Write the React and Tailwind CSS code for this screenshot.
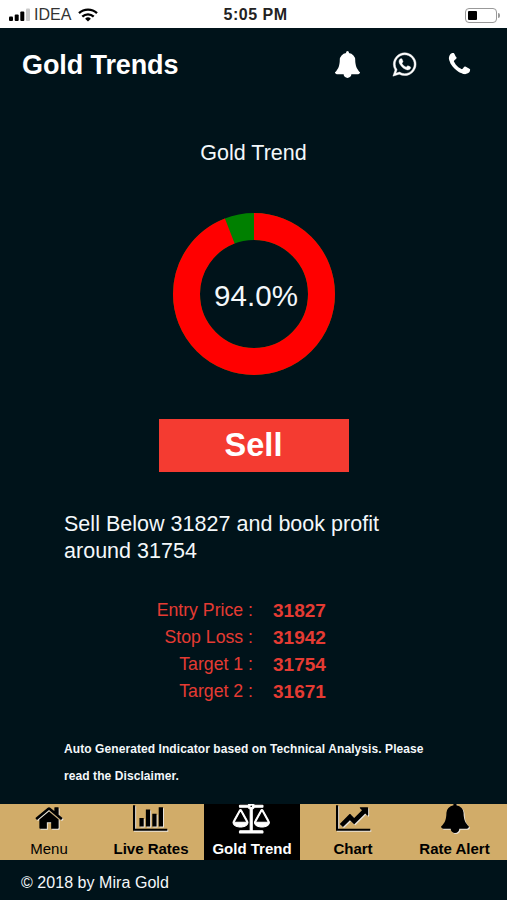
import clsx from 'clsx'

const ICONS = {
  bell: {
    width: 1792,
    d: 'M1728 1408q0 52-38 90t-90 38h-448q0 106-75 181t-181 75-181-75-75-181h-448q-52 0-90-38t-38-90q50-42 91-88t85-119.5 74.5-158.5 50-206 19.5-260q0-152 117-282.5t307-158.5q-8-19-8-39 0-40 28-68t68-28 68 28 28 68q0 20-8 39 190 28 307 158.5t117 282.5q0 139 19.5 260t50 206 74.5 158.5 85 119.5 91 88z',
  },
  whatsapp: {
    width: 1792,
    d: 'M1113 974q13 0 97.5 44t89.5 53q2 5 2 15 0 33-17 76-16 39-71 65.5t-102 26.5q-57 0-190-62-98-45-170-118t-148-185q-72-107-71-194v-8q3-91 74-158 24-22 52-22 6 0 18 1.5t19 1.5q19 0 26.5 6.5t15.5 27.5q8 20 33 88t25 75q0 21-34.5 57.5t-34.5 46.5q0 7 5 15 34 73 102 137 56 53 151 101 12 7 22 7 15 0 54-48.5t52-48.5zm-203 530q127 0 243.5-50t200.5-134 134-200.5 50-243.5-50-243.5-134-200.5-200.5-134-243.5-50-243.5 50-200.5 134-134 200.5-50 243.5q0 203 120 368l-79 233 242-77q158 104 345 104zm0-1382q153 0 292.5 60t240.5 161 161 240.5 60 292.5-60 292.5-161 240.5-240.5 161-292.5 60q-195 0-365-94l-417 134 136-405q-108-178-108-389 0-153 60-292.5t161-240.5 240.5-161 292.5-60z',
  },
  phone: {
    width: 1792,
    d: 'M1600 1240q0 27-10 70.5t-21 68.5q-21 50-122 106-94 51-186 51-27 0-53-3.5t-57.5-12.5-47-14.5-55.5-20.5-49-18q-98-35-175-83-127-79-264-216t-216-264q-48-77-83-175-3-9-18-49t-20.5-55.5-14.5-47-12.5-57.5-3.5-53q0-92 51-186 56-101 106-122 25-11 68.5-21t70.5-10q14 0 21 3 18 6 53 76 11 19 30 54t35 63.5 31 53.5q3 4 17.5 25t21.5 35.5 7 28.5q0 20-28.5 50t-62 55-62 53-28.5 46q0 9 5 22.5t8.5 20.5 14 24 11.5 19q76 137 174 235t235 174q2 1 19 11.5t24 14 20.5 8.5 22.5 5q18 0 46-28.5t53-62 55-62 50-28.5q14 0 28.5 7t35.5 21.5 25 17.5q25 15 53.5 31t63.5 35 54 30q70 35 76 53 3 7 3 21z',
  },
  home: {
    width: 1792,
    d: 'M1472 992v480q0 26-19 45t-45 19h-384v-384h-256v384h-384q-26 0-45-19t-19-45v-480q0-1 .5-3t.5-3l575-474 575 474q1 2 1 6zm223-69l-62 74q-8 9-21 11h-3q-13 0-21-7l-692-577-692 577q-12 8-24 7-13-2-21-11l-62-74q-8-10-7-23.5t11-21.5l719-599q32-26 76-26t76 26l244 204v-195q0-14 9-23t23-9h192q14 0 23 9t9 23v408l219 182q10 8 11 21.5t-7 23.5z',
  },
  bars: {
    width: 2048,
    d: 'M640 896v512h-256v-512h256zm384-512v1024h-256v-1024h256zm1024 1152v128h-2048v-1536h128v1408h1920zm-640-896v768h-256v-768h256zm384-384v1152h-256v-1152h256z',
  },
  scale: {
    width: 2176,
    d: 'M1728 448l-384 704h768zm-1280 0l-384 704h768zm821-192q-14 40-45.5 71.5t-71.5 45.5v1291h608q14 0 23 9t9 23v64q0 14-9 23t-23 9h-1344q-14 0-23-9t-9-23v-64q0-14 9-23t23-9h608v-1291q-40-14-71.5-45.5t-45.5-71.5h-491q-14 0-23-9t-9-23v-64q0-14 9-23t23-9h491q21-57 70-92.5t111-35.5 111 35.5 70 92.5h491q14 0 23 9t9 23v64q0 14-9 23t-23 9h-491zm-181 16q33 0 56.5-23.5t23.5-56.5-23.5-56.5-56.5-23.5-56.5 23.5-23.5 56.5 23.5 56.5 56.5 23.5zm1088 880q0 73-46.5 131t-117.5 91-144.5 49.5-139.5 16.5-139.5-16.5-144.5-49.5-117.5-91-46.5-131q0-11 35-81t92-174.5 107-195.5 102-184 56-100q18-33 56-33t56 33q4 7 56 100t102 184 107 195.5 92 174.5 35 81zm-1280 0q0 73-46.5 131t-117.5 91-144.5 49.5-139.5 16.5-139.5-16.5-144.5-49.5-117.5-91-46.5-131q0-11 35-81t92-174.5 107-195.5 102-184 56-100q18-33 56-33t56 33q4 7 56 100t102 184 107 195.5 92 174.5 35 81z',
  },
  line: {
    width: 2048,
    d: 'M2048 1536v128h-2048v-1536h128v1408h1920zm-128-1248v435q0 21-19.5 29.5t-35.5-7.5l-121-121-633 633q-10 10-23 10t-23-10l-233-233-416 416-192-192 585-585q10-10 23-10t23 10l233 233 464-464-121-121q-16-16-7.5-35.5t29.5-19.5h435q14 0 23 9t9 23z',
  },
}

const LEVELS = [
  { label: 'Entry Price :', value: '31827' },
  { label: 'Stop Loss :', value: '31942' },
  { label: 'Target 1 :', value: '31754' },
  { label: 'Target 2 :', value: '31671' },
]

const TABS = [
  { label: 'Menu', icon: 'home', plain: true },
  { label: 'Live Rates', icon: 'bars', nudge: 'mr-[2px]' },
  { label: 'Gold Trend', icon: 'scale', nudge: 'mr-[2px]', active: true },
  { label: 'Chart', icon: 'line' },
  { label: 'Rate Alert', icon: 'bell' },
]

function Icon({ name, className }) {
  const { width, d } = ICONS[name]
  return (
    <svg
      viewBox={`0 0 ${width} 1792`}
      fill="currentColor"
      stroke="currentColor"
      className={clsx('w-auto shrink-0 overflow-visible', className)}
    >
      <path d={d} />
    </svg>
  )
}

function StatusBar() {
  return (
    <div className="grid h-7 grid-cols-[1fr_auto_1fr] items-center bg-white pt-0.5 pr-[7px] pl-[9px] text-black">
      <div className="flex items-center">
        <svg viewBox="0 0 22 14" className="h-[14px] w-[22px]">
          <rect x="0" y="8.5" width="4" height="4.5" rx="1" />
          <rect x="5.7" y="6.5" width="4" height="6.5" rx="1" />
          <rect x="11.3" y="3.5" width="4" height="9.5" rx="1" />
          <rect x="17" y="0.5" width="4" height="12.5" rx="1" fill="#c9c9c9" />
        </svg>
        <span className="ml-[3px] text-[16px] leading-none text-[#333]">IDEA</span>
        <svg viewBox="0 0 20 14" className="ml-[7px] h-[14px] w-[20px]" fill="none" stroke="black" strokeWidth="2.3">
          <path d="M1 5.2a13 13 0 0 1 18 0" />
          <path d="M4.3 8.6a8.3 8.3 0 0 1 11.4 0" />
          <path d="M10 13.6l-2.9-2.9a4.2 4.2 0 0 1 5.8 0z" fill="black" stroke="none" />
        </svg>
      </div>
      <span className="pl-[2px] text-[16px] leading-none font-bold tracking-[0.5px] text-[#222]">5:05 PM</span>
      <div className="flex items-center justify-end">
        <div className="h-[15px] w-[32px] rounded-[4px] border border-[#999] p-[2px]">
          <div className="h-full w-[9px] rounded-[1px] bg-black" />
        </div>
        <div className="ml-px h-[5px] w-[2px] rounded-r-full bg-[#999]" />
      </div>
    </div>
  )
}

function Donut({ percent }) {
  const circumference = 2 * Math.PI * 67.5
  const filled = (circumference * percent) / 100
  return (
    <div className="grid size-[162px] place-items-center">
      <svg viewBox="0 0 162 162" className="col-start-1 row-start-1 size-full -rotate-90" fill="none" strokeWidth="27">
        <circle cx="81" cy="81" r="67.5" stroke="green" />
        <circle
          cx="81"
          cy="81"
          r="67.5"
          stroke="red"
          strokeDasharray={`${filled} ${circumference - filled}`}
        />
      </svg>
      <span className="col-start-1 row-start-1 pt-[4px] pl-[5px] text-[29.5px] leading-none tracking-[0.1px]">
        {percent.toFixed(1)}%
      </span>
    </div>
  )
}

function TabBar() {
  return (
    <nav className="grid h-14 grid-cols-[98px_106px_96px_106px_97px] bg-[#d1ac69] text-black">
      {TABS.map((tab) => (
        <button
          key={tab.label}
          className={clsx(
            'flex flex-col items-center overflow-hidden text-[15px]',
            tab.plain ? 'font-normal' : 'font-bold',
            tab.active && 'bg-black text-white',
          )}
        >
          <Icon
            name={tab.icon}
            className={clsx(
              '-mt-px h-[30px]',
              tab.nudge,
              tab.active ? 'stroke-[60]' : 'drop-shadow-[1px_1px_0_#e9e4dc]',
            )}
          />
          <span className="mt-[7px] leading-[18px] whitespace-nowrap">{tab.label}</span>
        </button>
      ))}
    </nav>
  )
}

function App() {
  return (
    <div className="flex h-[900px] w-[507px] flex-col overflow-hidden bg-[#00131a] font-['Liberation_Sans',Arial,sans-serif] text-[#f4f8fa]">
      <StatusBar />

      <header className="flex h-[74px] items-center justify-between pr-[34px] pl-[22px] text-white">
        <h1 className="text-[27px] leading-none font-bold tracking-[-0.1px]">Gold Trends</h1>
        <div className="flex items-center pb-[2px]">
          <Icon name="bell" className="h-[27px]" />
          <Icon name="whatsapp" className="ml-[30px] h-[27px] stroke-[30]" />
          <Icon name="phone" className="ml-[28px] h-[27px]" />
        </div>
      </header>

      <main className="flex flex-1 flex-col pt-[37px]">
        <h2 className="text-center text-[21.5px] leading-7">Gold Trend</h2>
        <div className="mt-[46px] flex justify-center">
          <Donut percent={94} />
        </div>
        <button className="mt-[44px] h-[53px] w-[190px] self-center bg-[#f43b31] text-[32.5px] leading-none font-bold text-white">
          Sell
        </button>

        <p className="mt-[39px] ml-16 w-[340px] text-[21.5px] leading-[27px] tracking-[0.02px]">
          Sell Below 31827 and book profit around 31754
        </p>

        <dl className="mt-[32px] text-[#e53b33]">
          {LEVELS.map((level) => (
            <div key={level.label} className="grid grid-cols-[253px_1fr] gap-5 leading-[27px]">
              <dt className="text-right text-[17.7px]">{level.label}</dt>
              <dd className="text-[19px] font-bold">{level.value}</dd>
            </div>
          ))}
        </dl>

        <p className="mt-[31px] ml-16 w-[370px] text-[12px] leading-[27px] font-bold tracking-[0.08px]">
          Auto Generated Indicator based on Technical Analysis. Please read the Disclaimer.
        </p>
      </main>

      <TabBar />
      <footer className="h-10 pt-[13px] pl-[21px] text-[16px] leading-5 tracking-[0.05px]">
        © 2018 by Mira Gold
      </footer>
    </div>
  )
}

export default App
